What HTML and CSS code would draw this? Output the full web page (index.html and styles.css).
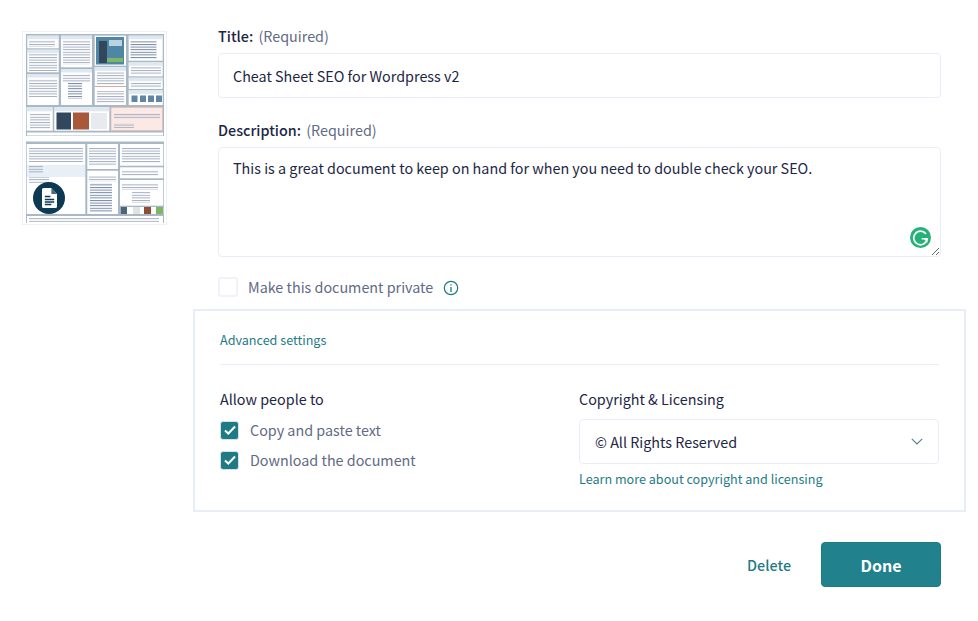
FILE: index.html
```html
<!DOCTYPE html>
<html lang="en">
<head>
<meta charset="utf-8">
<title>Edit document</title>
<link rel="stylesheet" href="styles.css">
</head>
<body>
<main class="page">
  <aside class="thumb">
    <svg class="thumb-art" width="145" height="193" viewBox="0 0 145 193" aria-hidden="true">
      <defs>
        <pattern id="lines" width="10" height="2.6" patternUnits="userSpaceOnUse">
          <rect width="10" height="1" fill="#a3aebf"/>
        </pattern>
        <pattern id="linesb" width="10" height="2.6" patternUnits="userSpaceOnUse">
          <rect width="10" height="1" fill="#7688a3"/>
        </pattern>
      </defs>
      <rect x="4" y="3" width="138" height="102" fill="#a9b8c7"/>
      <g fill="#fff">
        <rect x="5.3" y="4.7" width="31.4" height="12.6"/><rect x="5.3" y="18.7" width="31.4" height="22.6"/><rect x="5.3" y="43" width="31.4" height="31"/>
        <rect x="39" y="4.7" width="31" height="31.6"/><rect x="39" y="38" width="31" height="36"/>
        <rect x="72.7" y="4.7" width="31.3" height="30"/><rect x="72.7" y="36.3" width="31.3" height="37.7"/>
        <rect x="106.7" y="4.7" width="34" height="25"/><rect x="106.7" y="31.3" width="34" height="14"/><rect x="106.7" y="46.7" width="34" height="11.3"/><rect x="106.7" y="59.3" width="34" height="14.7"/>
        <rect x="4.7" y="76.3" width="26" height="23.4"/><rect x="32.3" y="76.3" width="55" height="23.4"/>
        <rect x="5" y="101.5" width="136" height="3"/>
      </g>
      <rect x="89" y="76.3" width="51.7" height="23.4" fill="#fbe9e6" stroke="#e3b3ad" stroke-width=".6"/>
      <g fill="#dfe7ef">
        <rect x="5.3" y="4.7" width="31.4" height="3.500"/><rect x="5.3" y="18.7" width="31.4" height="3.500"/><rect x="5.3" y="43" width="31.4" height="3.500"/>
        <rect x="39" y="4.7" width="31" height="3.500"/><rect x="39" y="38" width="31" height="3.500"/>
        <rect x="72.7" y="36.3" width="31.3" height="3.500"/>
        <rect x="106.7" y="4.7" width="34" height="3.500"/><rect x="106.7" y="31.3" width="34" height="3.500"/><rect x="106.7" y="46.7" width="34" height="3.500"/><rect x="106.7" y="59.3" width="34" height="3.500"/>
        <rect x="4.7" y="76.3" width="26" height="4"/><rect x="32.3" y="76.3" width="55" height="4"/>
      </g>
      <g fill="url(#lines)">
        <rect x="7" y="9" width="26" height="7"/><rect x="7" y="23" width="28" height="17"/><rect x="7" y="48" width="28" height="18"/>
        <rect x="41" y="9" width="27" height="25"/><rect x="41" y="43" width="27" height="8"/>
        <rect x="75" y="41" width="27" height="13"/><rect x="75" y="60" width="27" height="12"/>
        <rect x="109" y="36" width="30" height="8"/><rect x="109" y="51" width="30" height="6"/>
        <rect x="8" y="82" width="20" height="16"/><rect x="92" y="82" width="46" height="6"/><rect x="92" y="92" width="20" height="5"/>
      </g>
      <g fill="url(#linesb)">
        <rect x="108.5" y="10" width="26" height="18"/><rect x="46" y="52" width="14" height="16"/>
      </g>
      <rect x="72.7" y="55" width="31.3" height="1" fill="#d9a7a0"/>
      <rect x="74" y="6" width="28" height="27.5" fill="#4d87a3"/>
      <rect x="77" y="10" width="8" height="22" fill="#33465c"/>
      <rect x="87" y="9" width="13" height="6" fill="#b9d4e0"/>
      <rect x="85" y="27" width="16" height="4" fill="#7fb662"/>
      <g fill="#5f86a6"><rect x="109.5" y="64.5" width="6" height="6.500"/><rect x="118" y="64.5" width="6" height="6.500"/><rect x="126" y="64.5" width="6" height="6.500"/><rect x="134" y="64.5" width="6" height="6.500"/></g>
      <rect x="34.5" y="81.5" width="14.5" height="17" fill="#30475e"/>
      <rect x="51" y="81.5" width="16" height="17" fill="#a9583a"/>
      <rect x="69" y="82" width="16" height="16" fill="#e7ebef"/>
      <rect x="4" y="110.5" width="138" height="81.5" fill="#a9b8c7"/>
      <g fill="#fff">
        <rect x="4.7" y="113" width="58.6" height="70"/>
        <rect x="65.3" y="113" width="30.7" height="25"/><rect x="65.3" y="139.7" width="30.7" height="43.3"/>
        <rect x="98" y="113" width="43.3" height="21.7"/><rect x="98" y="136.3" width="43.3" height="11"/><rect x="98" y="149" width="43.3" height="25.7"/>
        <rect x="98" y="176" width="43.3" height="7"/>
        <rect x="5" y="185" width="136" height="7"/>
      </g>
      <rect x="5" y="134" width="58" height="12" fill="#e8eff6"/>
      <g fill="url(#lines)">
        <rect x="7" y="117" width="54" height="14"/><rect x="7" y="134" width="14" height="8"/><rect x="7" y="146" width="20" height="6"/>
        <rect x="67" y="117" width="27" height="18"/><rect x="67" y="145" width="27" height="6"/>
        <rect x="100" y="117" width="38" height="15"/><rect x="100" y="139" width="36" height="6"/><rect x="100" y="153" width="36" height="6"/><rect x="110" y="160" width="18" height="12"/>
        <rect x="7" y="187" width="130" height="4"/>
      </g>
      <rect x="68" y="152" width="22" height="29" fill="url(#linesb)"/>
      <rect x="98.5" y="176" width="6.500" height="7" fill="#4e6478"/><rect x="111" y="176" width="7" height="7" fill="#dfe3e6"/><rect x="122" y="176" width="7" height="7" fill="#8f4d38"/><rect x="134" y="176" width="7" height="7" fill="#7fb662"/>
    </svg>
    <span class="doc-badge">
      <svg width="15" height="20" viewBox="0 0 16 20" preserveAspectRatio="none" aria-hidden="true">
        <path d="M1.5 0H10l6 6v12.500a1.500 1.500 0 0 1-1.500 1.500h-13A1.500 1.500 0 0 1 0 18.500v-17A1.500 1.500 0 0 1 1.500 0z" fill="#fff"/>
        <path d="M10 0v6h6z" fill="#0d3a52" opacity=".75"/>
        <path d="M3 8.500h6M3 11.500h10M3 14h10M3 16.500h7" stroke="#0d3a52" stroke-width="1.300" fill="none"/>
      </svg>
    </span>
  </aside>

  <form class="form">
    <label class="field-label" for="title"><b>Title:</b> <span class="req">(Required)</span></label>
    <input class="control title-input" id="title" type="text" value="Cheat Sheet SEO for Wordpress v2">

    <label class="field-label desc-label" for="desc"><b>Description:</b> <span class="req">(Required)</span></label>
    <div class="desc-wrap">
      <textarea class="control desc-input" id="desc">This is a great document to keep on hand for when you need to double check your SEO.</textarea>
      <span class="grammarly">
        <svg width="17" height="17" viewBox="0 0 15 15" aria-hidden="true">
          <path d="M12.300 4.300A6 6 0 1 0 13.500 8.600H8.500" fill="none" stroke="#fff" stroke-width="1.500"/>
          <path d="M13.600 8.600v3.600l-3.200-3.600z" fill="#fff"/>
        </svg>
      </span>
    </div>

    <div class="private-row">
      <span class="box"></span>
      <span class="private-text">Make this document private</span>
      <svg class="info" width="16" height="16" viewBox="0 0 16 16" aria-hidden="true">
        <circle cx="8" cy="8" r="6.700" fill="none" stroke="#1e7b85" stroke-width="1.200"/>
        <path d="M8 7v5M8 4.200v1.400" fill="none" stroke="#1e7b85" stroke-width="1.300"/>
      </svg>
    </div>

    <section class="advanced">
      <h2 class="adv-title">Advanced settings</h2>
      <div class="adv-grid">
        <div class="allow">
          <h3 class="adv-head">Allow people to</h3>
          <div class="check-row">
            <span class="box checked"><svg width="14" height="12" viewBox="0 0 14 12" aria-hidden="true"><path d="M2 6.500l3.300 3L12 2.500" fill="none" stroke="#fff" stroke-width="2"/></svg></span>
            <span>Copy and paste text</span>
          </div>
          <div class="check-row">
            <span class="box checked"><svg width="14" height="12" viewBox="0 0 14 12" aria-hidden="true"><path d="M2 6.500l3.300 3L12 2.500" fill="none" stroke="#fff" stroke-width="2"/></svg></span>
            <span>Download the document</span>
          </div>
        </div>
        <div class="license">
          <h3 class="adv-head">Copyright &amp; Licensing</h3>
          <div class="select">
            <span>© All Rights Reserved</span>
            <svg width="12" height="7" viewBox="0 0 12 7" aria-hidden="true"><path d="M.8.800L6 6l5.200-5.200" fill="none" stroke="#4f7f8c" stroke-width="1.100"/></svg>
          </div>
          <a class="learn" href="#">Learn more about copyright and licensing</a>
        </div>
      </div>
    </section>

    <div class="actions">
      <a class="delete" href="#">Delete</a>
      <button class="done" type="button">Done</button>
    </div>
  </form>
</main>
</body>
</html>
```

FILE: styles.css
```css
* { box-sizing: border-box; }

html, body { margin: 0; height: 100%; overflow: hidden; background: #fff; }

body {
  font-family: "Noto Sans CJK SC", "Open Sans", sans-serif;
  font-size: 14.35px;
  line-height: 20px;
  color: #1c2645;
}

.page {
  display: flex;
  align-items: flex-start;
  padding: 0 37px 0 22px;
}

.thumb {
  position: relative;
  flex: none;
  width: 145px;
  height: 194px;
  margin-top: 31px;
  margin-right: 51px;
  background: #fff;
  border: 1px solid #eef1f8;
}

.thumb-art {
  display: block;
  margin: -1px;
  filter: blur(0.75px);
}

.doc-badge {
  position: absolute;
  left: 10px;
  top: 150px;
  width: 32px;
  height: 32px;
  border-radius: 50%;
  background: #0d3a52;
  display: flex;
  align-items: center;
  justify-content: center;
}

.form { flex: 1; min-width: 0; padding-top: 26px; }

.field-label { display: block; height: 20px; margin-bottom: 7px; }
.field-label b { font-weight: 500; }
.req { color: #5f6a85; margin-left: 2px; }
.desc-label { margin-top: 22px; margin-bottom: 7px; }

.control {
  display: block;
  width: 100%;
  font: inherit;
  color: inherit;
  background: #fff;
  border: 1px solid #e9edf8;
  border-radius: 4px;
  outline: none;
  padding: 11px 14px;
}

.title-input { height: 45px; }

.desc-wrap { position: relative; }
.desc-input { height: 110px; display: block; padding-top: 10px; }

.grammarly {
  position: absolute;
  right: 10px;
  bottom: 9px;
  width: 21px;
  height: 21px;
  border-radius: 50%;
  background: #25b277;
  display: flex;
  align-items: center;
  justify-content: center;
}

.private-row {
  display: flex;
  align-items: center;
  height: 20px;
  margin-top: 20px;
  color: #5f6a85;
}

.box {
  flex: none;
  width: 20px;
  height: 20px;
  background: #fff;
  border: 2px solid #f0f2f9;
  border-radius: 3px;
}

.private-text { margin-left: 10px; }
.info { margin-left: 10px; margin-top: 2px; }

.advanced {
  margin: 12px -25px 0 -25px;
  height: 203px;
  border: 2px solid #e9edf8;
  padding: 19px 25px 0 25px;
}

.adv-title {
  margin: 0;
  height: 35px;
  font-size: 12.6px;
  font-weight: 400;
  line-height: 20px;
  color: #1e7b85;
  border-bottom: 1px solid #e9edf8;
}

.adv-grid {
  display: grid;
  grid-template-columns: 359px 360px;
  margin-top: 24px;
}

.allow, .license { min-width: 0; }

.adv-head {
  margin: 0;
  font-size: 14.35px;
  font-weight: 400;
  line-height: 20px;
}

.check-row {
  display: flex;
  align-items: center;
  height: 20px;
  margin-top: 10px;
  color: #5f6a85;
  gap: 11px;
}

.adv-head + .check-row { margin-top: 11px; }

.box.checked {
  width: 19px;
  height: 19px;
  display: flex;
  align-items: center;
  justify-content: center;
  background: #1e7b85;
  border: 1px solid #d5e2ea;
}

.select {
  display: flex;
  align-items: center;
  justify-content: space-between;
  height: 45px;
  margin-top: 10px;
  padding: 0 15px;
  border: 1px solid #e9edf8;
  border-radius: 4px;
}

.learn {
  display: block;
  margin-top: 5px;
  font-size: 12.6px;
  line-height: 20px;
  color: #1e7b85;
  text-decoration: none;
}

.actions {
  display: flex;
  justify-content: flex-end;
  align-items: center;
  margin-top: 30px;
  gap: 30px;
}

.delete {
  font-weight: 500;
  color: #1e7b85;
  text-decoration: none;
}

.done {
  width: 120px;
  height: 45px;
  font: inherit;
  font-size: 16px;
  font-weight: 700;
  color: #fff;
  background: #21818c;
  border: 1px solid #1e7b85;
  border-radius: 4px;
}
```
